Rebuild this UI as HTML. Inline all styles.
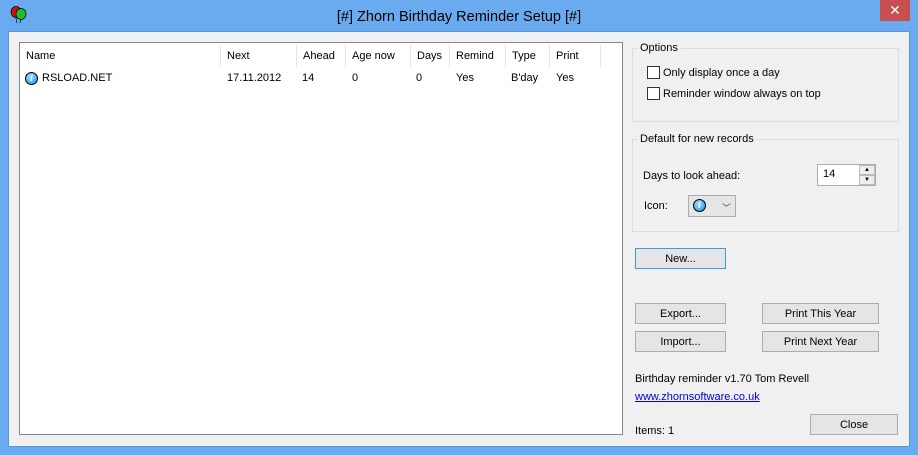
<!DOCTYPE html>
<html><head><style>
*{margin:0;padding:0;box-sizing:border-box}
body{width:918px;height:455px;background:#6aabf0;font-family:"Liberation Sans",sans-serif;font-size:11px;color:#000;position:relative;overflow:hidden}
.a{position:absolute}
.client{left:8px;top:31px;width:902px;height:416px;background:#f0f0f0;border:1px solid #5a96d8}
.list{left:19px;top:42px;width:604px;height:393px;background:#fff;border:1px solid #828790}
.hd{position:absolute;top:45px;height:22px;line-height:22px;border-right:1px solid #e5e5e5;padding-left:6px}
.cell{position:absolute;top:71px;line-height:14px}
.grp{border:1px solid #dcdcdc;}
.gl{background:#f0f0f0;padding:0 3px;line-height:13px}
.btn{position:absolute;background:#e5e5e5;border:1px solid #acacac;text-align:center;line-height:20px}
.cb{position:absolute;width:13px;height:13px;border:1px solid #333;background:#fff}
.info{display:inline-block;width:13px;height:13px;border-radius:50%;background:radial-gradient(circle at 40% 35%,#9fe0ff,#1a8ee0);border:1px solid #000;color:#fff;font-size:9px;font-weight:bold;text-align:center;line-height:11px;font-style:italic}
</style></head><body>
<div class="a" style="left:880px;top:0;width:30px;height:21px;background:#c74f4f;color:#fff;text-align:center;line-height:20px;font-size:14px">✕</div>
<svg class="a" style="left:9px;top:6px" width="20" height="18"><ellipse cx="7" cy="6" rx="5" ry="5.5" fill="#d01010" stroke="#000" stroke-width=".7"/><ellipse cx="12" cy="8" rx="5" ry="5.5" fill="#20c020" stroke="#000" stroke-width=".7"/><path d="M7 12l1 5M12 14l-1 3" stroke="#000" stroke-width=".7"/></svg>
<div class="a" style="left:0;width:918px;top:9px;text-align:center;font-size:14.5px;color:#000">[#] Zhorn Birthday Reminder Setup [#]</div>
<div class="a client"></div>
<div class="a list"></div>
<div class="hd" style="left:20px;width:201px">Name</div>
<div class="hd" style="left:221px;width:76px">Next</div>
<div class="hd" style="left:297px;width:49px">Ahead</div>
<div class="hd" style="left:346px;width:65px">Age now</div>
<div class="hd" style="left:411px;width:39px">Days</div>
<div class="hd" style="left:450px;width:56px">Remind</div>
<div class="hd" style="left:506px;width:44px">Type</div>
<div class="hd" style="left:550px;width:51px">Print</div>
<div class="cell" style="left:25px"><span class="info">i</span></div>
<div class="cell" style="left:42px">RSLOAD.NET</div>
<div class="cell" style="left:227px">17.11.2012</div>
<div class="cell" style="left:302px">14</div>
<div class="cell" style="left:352px">0</div>
<div class="cell" style="left:416px">0</div>
<div class="cell" style="left:456px">Yes</div>
<div class="cell" style="left:511px">B'day</div>
<div class="cell" style="left:556px">Yes</div>

<div class="a grp" style="left:632px;top:48px;width:267px;height:74px"></div>
<div class="a gl" style="left:637px;top:42px">Options</div>
<div class="cb" style="left:647px;top:66px"></div><div class="a" style="left:663px;top:67px">Only display once a day</div>
<div class="cb" style="left:647px;top:87px"></div><div class="a" style="left:663px;top:88px">Reminder window always on top</div>

<div class="a grp" style="left:632px;top:139px;width:267px;height:93px"></div>
<div class="a gl" style="left:637px;top:133px">Default for new records</div>
<div class="a" style="left:643px;top:170px">Days to look ahead:</div>
<div class="a" style="left:817px;top:164px;width:59px;height:22px;background:#fff;border:1px solid #acacac;padding:3px 5px">14</div>
<div class="a" style="left:859px;top:165px;width:16px;height:10px;background:#eee;border:1px solid #bbb;font-size:6px;text-align:center;line-height:8px">▲</div>
<div class="a" style="left:859px;top:175px;width:16px;height:10px;background:#eee;border:1px solid #bbb;font-size:6px;text-align:center;line-height:8px">▼</div>
<div class="a" style="left:644px;top:200px">Icon:</div>
<div class="a" style="left:688px;top:195px;width:48px;height:22px;background:#e5e5e5;border:1px solid #acacac;padding:3px 0 0 4px"><span class="info">i</span><span style="position:absolute;left:33px;top:5px;font-size:9px;color:#444">﹀</span></div>

<div class="btn" style="left:635px;top:248px;width:91px;height:21px;border-color:#3c9ae8">New...</div>
<div class="btn" style="left:635px;top:303px;width:91px;height:21px">Export...</div>
<div class="btn" style="left:635px;top:331px;width:91px;height:21px">Import...</div>
<div class="btn" style="left:762px;top:303px;width:117px;height:21px">Print This Year</div>
<div class="btn" style="left:762px;top:331px;width:117px;height:21px">Print Next Year</div>
<div class="a" style="left:635px;top:373px">Birthday reminder v1.70 Tom Revell</div>
<div class="a" style="left:635px;top:391px;color:#0000ee;text-decoration:underline">www.zhornsoftware.co.uk</div>
<div class="a" style="left:635px;top:425px">Items: 1</div>
<div class="btn" style="left:810px;top:414px;width:88px;height:21px">Close</div>
</body></html>
